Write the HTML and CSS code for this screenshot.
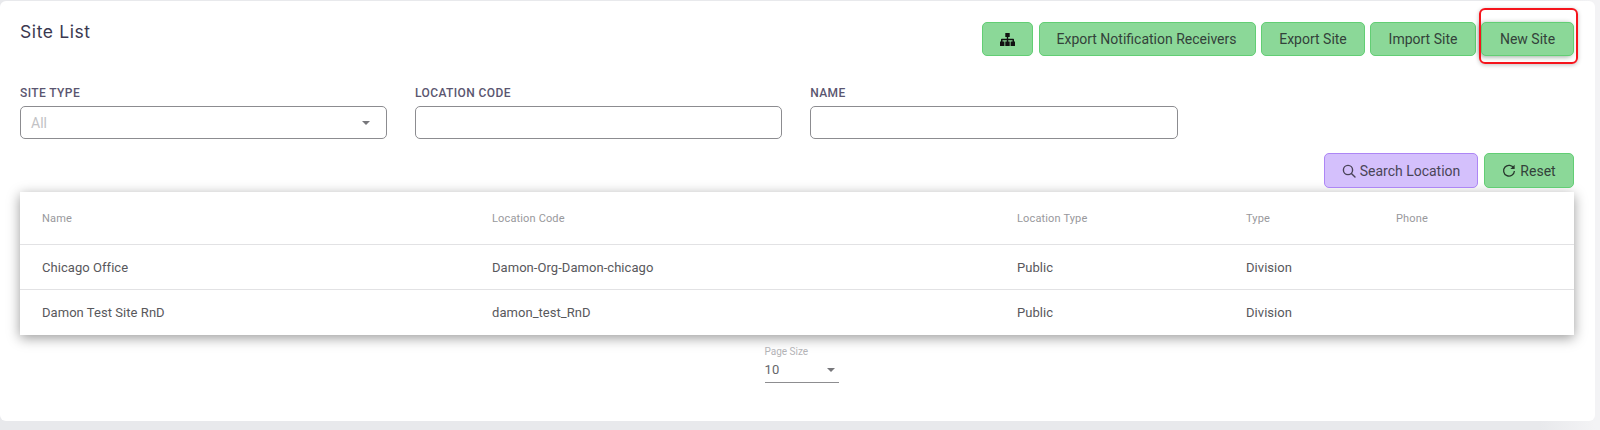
FILE: index.html
```html
<!DOCTYPE html>
<html lang="en">
<head>
<meta charset="utf-8">
<title>Site List</title>
<link rel="stylesheet" href="styles.css">
</head>
<body>
<main class="card">
  <header class="top">
    <h1 class="title">Site List</h1>
    <div class="actions">
      <button class="btn btn-green btn-icon" aria-label="Hierarchy">
        <svg class="ic-tree" viewBox="0 0 15 13" width="15" height="13"><path d="M5.300 0h4.400v4H8.200v1.800h5.100c.4 0 .7.300.7.700v2H15V13h-4.400V8.500h1.900V7.200H8.200v1.300h1.500V13H5.300V8.500h1.500V7.200H2.500v1.300h1.900V13H0V8.500h1V6.500c0-.4.300-.7.700-.7h5.100V4H5.300z" fill="#111"/></svg>
      </button>
      <button class="btn btn-green btn-notif">Export Notification Receivers</button>
      <button class="btn btn-green btn-export">Export Site</button>
      <button class="btn btn-green btn-import">Import Site</button>
      <span class="highlight-wrap">
        <button class="btn btn-green btn-new">New Site</button>
        <span class="highlight"></span>
      </span>
    </div>
  </header>

  <section class="filters">
    <div class="field">
      <label class="field-label">SITE TYPE</label>
      <div class="control">
        <span class="placeholder">All</span>
        <span class="caret caret-control"></span>
      </div>
    </div>
    <div class="field">
      <label class="field-label">LOCATION CODE</label>
      <div class="control"></div>
    </div>
    <div class="field">
      <label class="field-label">NAME</label>
      <div class="control"></div>
    </div>
  </section>

  <div class="search-row">
    <button class="btn btn-purple btn-search">
      <svg viewBox="0 0 14 14" width="14" height="14"><circle cx="6" cy="6" r="4.600" fill="none" stroke="#4a4358" stroke-width="1.400"/><path d="M9.400 9.400l3.600 3.600" stroke="#4a4358" stroke-width="1.400" stroke-linecap="round"/></svg>
      Search Location
    </button>
    <button class="btn btn-green btn-reset">
      <svg viewBox="0 0 14 14" width="14" height="14"><path d="M11.800 4.200A5.400 5.400 0 1 0 12.400 7" fill="none" stroke="#27362c" stroke-width="1.300"/><path d="M12.600 0.800v4.200H8.400z" fill="#27362c"/></svg>
      Reset
    </button>
  </div>

  <div class="table-card">
    <table class="table">
      <colgroup>
        <col class="c-name"><col class="c-code"><col class="c-ltype"><col class="c-type"><col class="c-phone">
      </colgroup>
      <thead>
        <tr><th>Name</th><th>Location Code</th><th>Location Type</th><th>Type</th><th>Phone</th></tr>
      </thead>
      <tbody>
        <tr><td>Chicago Office</td><td>Damon-Org-Damon-chicago</td><td>Public</td><td>Division</td><td></td></tr>
        <tr><td>Damon Test Site RnD</td><td>damon_test_RnD</td><td>Public</td><td>Division</td><td></td></tr>
      </tbody>
    </table>
  </div>

  <div class="pager">
    <div class="page-size">
      <span class="page-label">Page Size</span>
      <div class="page-value"><span>10</span><span class="caret caret-pager"></span></div>
    </div>
  </div>
</main>
</body>
</html>
```
FILE: styles.css
```css
* { box-sizing: border-box; }
html, body { margin: 0; height: 100%; overflow: hidden; }
body {
  background: linear-gradient(to right, #e8e9ec 1540px, #f3f3f5 1595px);
  font-family: Roboto, "Liberation Sans", sans-serif;
  color: #3c3c40;
}
.card {
  margin: 1px 5px 0 0;
  height: 420px;
  background: #fff;
  border-radius: 6px;
  padding: 21px 21px 0 20px;
}
.top { display: flex; justify-content: space-between; align-items: flex-start; height: 35px; }
.title {
  margin: 0;
  font-family: Inter, sans-serif;
  font-size: 17.500px;
  line-height: 20px;
  font-weight: 400;
  letter-spacing: 0.6px;
  color: #3a3850;
}
.actions { display: flex; gap: 5px; }
.btn {
  display: inline-flex;
  align-items: center;
  justify-content: center;
  gap: 4px;
  height: 34px;
  padding: 0;
  border-radius: 5px;
  font-family: Roboto, sans-serif;
  font-size: 14px;
  cursor: pointer;
}
.btn-green { background: #8bd898; border: 1px solid #62ce74; color: #33423a; }
.btn-purple { background: #d4c0fc; border: 1px solid #ad86f5; color: #4a4558; }
.btn-icon { width: 51px; }
.btn-notif { width: 217px; margin-left: 1px; padding-right: 2px; }
.btn-export { width: 104px; }
.btn-import { width: 106px; }
.btn-new { width: 93px; box-shadow: -2px 1px 5px rgba(30, 70, 40, 0.45); }
.highlight-wrap { position: relative; display: block; }
.highlight {
  position: absolute;
  left: -2px;
  right: -4px;
  top: -14px;
  bottom: -8px;
  border: 2px solid #f5141c;
  border-radius: 6px;
  box-shadow: 0 1px 4px rgba(0, 0, 0, 0.25);
  pointer-events: none;
}
.filters {
  display: grid;
  grid-template-columns: repeat(3, 367.400px);
  column-gap: 27.700px;
  margin-top: 28px;
}
.field-label {
  display: block;
  height: 21px;
  font-size: 12px;
  line-height: 16px;
  font-weight: 500;
  letter-spacing: 0.4px;
  color: #5a5670;
}
.control {
  position: relative;
  display: flex;
  align-items: center;
  height: 33px;
  padding: 0 10px;
  background: #fff;
  border: 1px solid #8c8c90;
  border-radius: 5px;
}
.placeholder { font-size: 14px; color: #c2c2c5; }
.caret { width: 0; height: 0; border-left: 4.500px solid transparent; border-right: 4.500px solid transparent; border-top: 4.500px solid #77777b; }
.caret-control { margin-left: auto; margin-right: 6px; }
.search-row { display: flex; justify-content: flex-end; gap: 6px; margin-top: 14px; }
.btn-search { width: 154px; height: 35px; }
.btn-reset { width: 90px; height: 35px; }
.table-card {
  margin-top: 4px;
  background: #fff;
  box-shadow: 0 3px 12px rgba(0, 0, 0, 0.4);
}
.table { width: 100%; border-collapse: collapse; table-layout: fixed; }
.c-name { width: 450px; }
.c-code { width: 525px; }
.c-ltype { width: 229px; }
.c-type { width: 150px; }
.table th {
  height: 52px;
  padding: 2px 0 0 22px;
  text-align: left;
  font-size: 11px;
  font-weight: 400;
  letter-spacing: 0.15px;
  color: #98989c;
  border-bottom: 1px solid #e2e2e4;
}
.table td {
  height: 45px;
  padding: 2px 0 0 22px;
  font-size: 13px;
  letter-spacing: 0.05px;
  color: #58585c;
  border-bottom: 1px solid #e2e2e4;
}
.table tbody tr:last-child td { border-bottom: 0; height: 46px; padding-top: 0; }
.pager { display: flex; justify-content: center; margin-top: 10px; padding-left: 9px; }
.page-size { width: 74px; }
.page-label { display: block; font-size: 10px; line-height: 13px; color: #b3b3b6; }
.page-value {
  display: flex;
  align-items: center;
  justify-content: space-between;
  height: 25px;
  padding: 0 4px 2px 0;
  font-size: 13px;
  letter-spacing: 0.3px;
  color: #66666a;
  border-bottom: 1px solid #8d8d90;
}
.caret-pager { margin-top: 1px; }
```
